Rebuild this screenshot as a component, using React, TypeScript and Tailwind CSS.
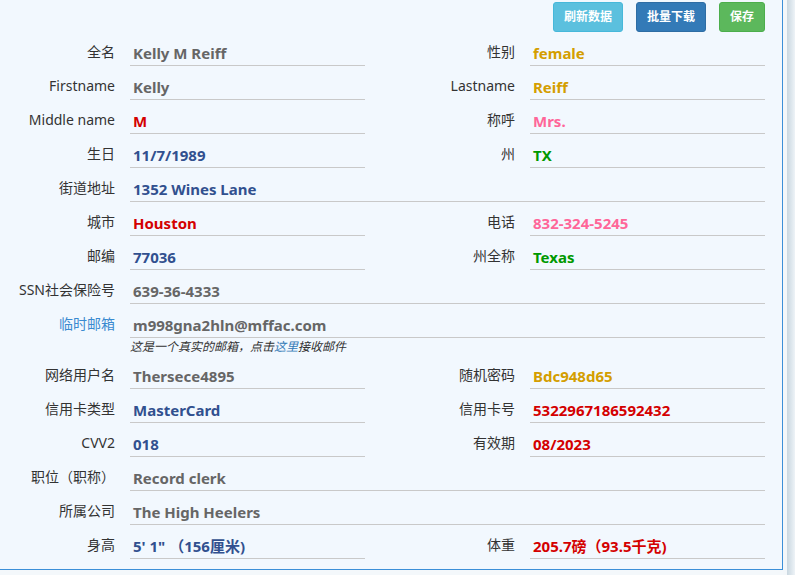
import React from "react";

type Field = { label: string; value: string; color: string; labelColor?: string };

const C = {
  grey: "text-[#666666]",
  gold: "text-[#d49e00]",
  red: "text-[#d40000]",
  pink: "text-[#ff6699]",
  green: "text-[#009900]",
  blue: "text-[#31508f]",
};

const Label = ({ text, wide, color }: { text: string; wide?: boolean; color?: string }) => (
  <div
    className={`${wide ? "w-[165px]" : "w-[130px]"} shrink-0 pr-[15px] pt-[10px] text-right text-[14px] leading-[20px] ${
      color ?? "text-[#333333]"
    }`}
  >
    {text}
  </div>
);

const Value = ({ text, color, full }: { text: string; color: string; full?: boolean }) => (
  <div
    className={`${full ? "w-[635px]" : "w-[235px]"} h-[34px] shrink-0 border-b border-[#c9c9c9] pt-[11px] pl-[3px] text-[15px] font-bold leading-[20px] ${color}`}
  >
    {text}
  </div>
);

const Pair = ({ a, b }: { a: Field; b?: Field }) => (
  <div className="flex h-[34px]">
    <Label text={a.label} color={a.labelColor} />
    <Value text={a.value} color={a.color} full={!b} />
    {b && (
      <>
        <Label text={b.label} wide />
        <Value text={b.value} color={b.color} />
      </>
    )}
  </div>
);

export default function App() {
  return (
    <div
      className="flex h-[575px] w-[795px] overflow-hidden bg-[#f4f8fb] text-[#333333]"
      style={{ fontFamily: '"Noto Sans", "Noto Sans CJK SC", sans-serif' }}
    >
      <div className="h-[570px] w-[783px] shrink-0 border-r border-b border-[#3b8fd8] bg-[#f2f8fe]">
        <div className="flex h-[32px] justify-end gap-[13px] pt-[2px] pr-[17px]">
          <button className="h-[30px] rounded-[3px] border border-[#46b8da] bg-[#5bc0de] px-[10px] text-[12px] font-bold text-white">
            刷新数据
          </button>
          <button className="h-[30px] rounded-[3px] border border-[#2e6da4] bg-[#337ab7] px-[10px] text-[12px] font-bold text-white">
            批量下载
          </button>
          <button className="h-[30px] rounded-[3px] border border-[#4cae4c] bg-[#5cb85c] px-[10px] text-[12px] font-bold text-white">
            保存
          </button>
        </div>

        <Pair a={{ label: "全名", value: "Kelly M Reiff", color: C.grey }} b={{ label: "性别", value: "female", color: C.gold }} />
        <Pair a={{ label: "Firstname", value: "Kelly", color: C.grey }} b={{ label: "Lastname", value: "Reiff", color: C.gold }} />
        <Pair a={{ label: "Middle name", value: "M", color: C.red }} b={{ label: "称呼", value: "Mrs.", color: C.pink }} />
        <Pair a={{ label: "生日", value: "11/7/1989", color: C.blue }} b={{ label: "州", value: "TX", color: C.green }} />
        <Pair a={{ label: "街道地址", value: "1352 Wines Lane", color: C.blue }} />
        <Pair a={{ label: "城市", value: "Houston", color: C.red }} b={{ label: "电话", value: "832-324-5245", color: C.pink }} />
        <Pair a={{ label: "邮编", value: "77036", color: C.blue }} b={{ label: "州全称", value: "Texas", color: C.green }} />
        <Pair a={{ label: "SSN社会保险号", value: "639-36-4333", color: C.grey }} />

        <div className="flex">
          <Label text="临时邮箱" color="text-[#3a8ad0]" />
          <div className="w-[635px]">
            <Value text="m998gna2hln@mffac.com" color={C.grey} full />
            <div className="text-[12px] leading-[17px] italic text-[#333333]">
              这是一个真实的邮箱，点击<a className="text-[#337ab7]">这里</a>接收邮件
            </div>
          </div>
        </div>

        <Pair a={{ label: "网络用户名", value: "Thersece4895", color: C.grey }} b={{ label: "随机密码", value: "Bdc948d65", color: C.gold }} />
        <Pair a={{ label: "信用卡类型", value: "MasterCard", color: C.blue }} b={{ label: "信用卡号", value: "5322967186592432", color: C.red }} />
        <Pair a={{ label: "CVV2", value: "018", color: C.blue }} b={{ label: "有效期", value: "08/2023", color: C.red }} />
        <Pair a={{ label: "职位（职称）", value: "Record clerk", color: C.grey }} />
        <Pair a={{ label: "所属公司", value: "The High Heelers", color: C.grey }} />
        <Pair a={{ label: "身高", value: "5' 1\" （156厘米)", color: C.blue }} b={{ label: "体重", value: "205.7磅（93.5千克)", color: C.red }} />
      </div>
      <div className="h-full w-[4px] shrink-0 bg-[#f3f7fa]" />
      <div className="h-full flex-1 bg-gradient-to-r from-[#c9d7e0] to-[#eef3f7]" />
    </div>
  );
}
